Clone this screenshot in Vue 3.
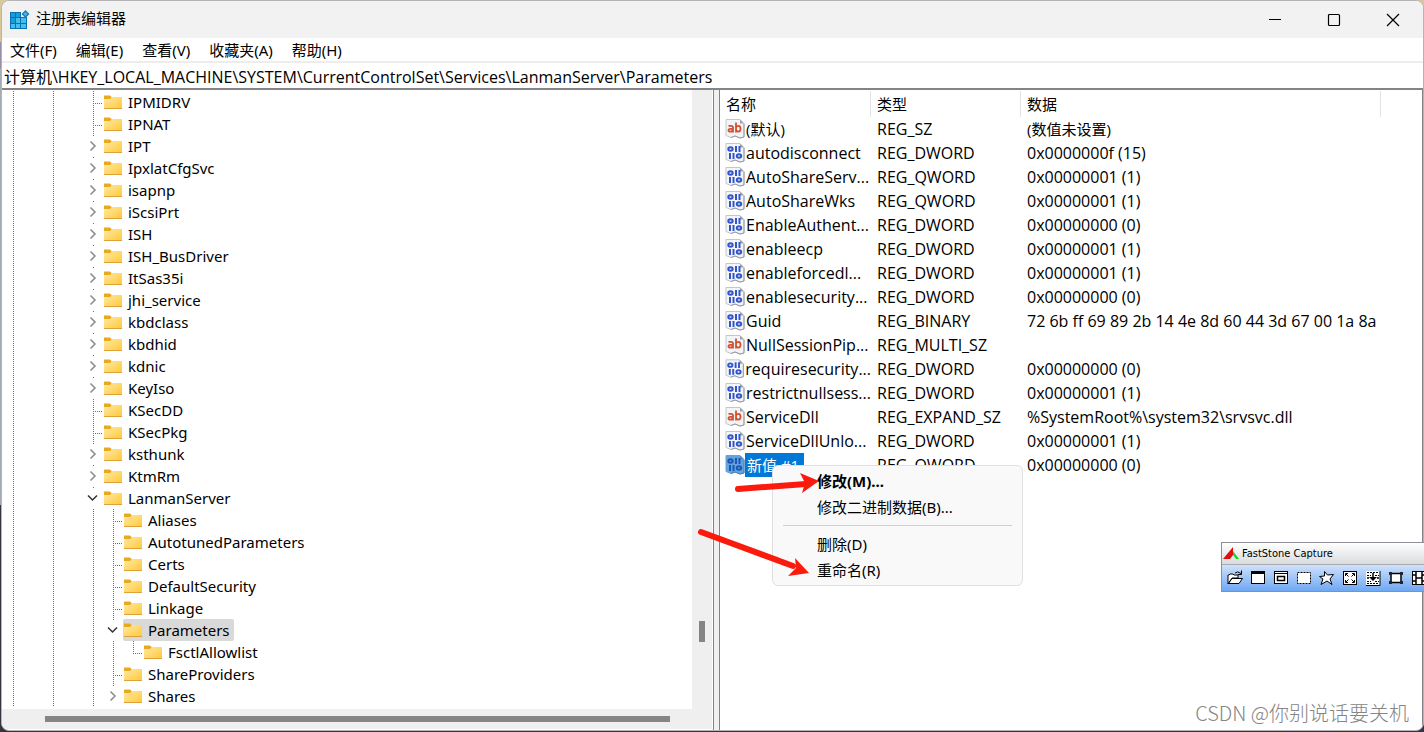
<script setup>
import { ref } from 'vue'

const menus = ['文件(F)', '编辑(E)', '查看(V)', '收藏夹(A)', '帮助(H)']
const path = ref('计算机\\HKEY_LOCAL_MACHINE\\SYSTEM\\CurrentControlSet\\Services\\LanmanServer\\Parameters')

const base = ['line', 'blank', 'line', 'blank']
const node = (name, kind, extra = [], selected = false) => ({
  name,
  cells: [...base, ...extra, kind],
  selected
})

const tree = [
  node('IPMIDRV', 'tee'),
  node('IPNAT', 'tee'),
  node('IPT', 'closed'),
  node('IpxlatCfgSvc', 'closed'),
  node('isapnp', 'closed'),
  node('iScsiPrt', 'closed'),
  node('ISH', 'closed'),
  node('ISH_BusDriver', 'closed'),
  node('ItSas35i', 'closed'),
  node('jhi_service', 'closed'),
  node('kbdclass', 'closed'),
  node('kbdhid', 'closed'),
  node('kdnic', 'closed'),
  node('KeyIso', 'closed'),
  node('KSecDD', 'tee'),
  node('KSecPkg', 'tee'),
  node('ksthunk', 'closed'),
  node('KtmRm', 'closed'),
  node('LanmanServer', 'open'),
  node('Aliases', 'tee', ['line']),
  node('AutotunedParameters', 'tee', ['line']),
  node('Certs', 'tee', ['line']),
  node('DefaultSecurity', 'tee', ['line']),
  node('Linkage', 'tee', ['line']),
  node('Parameters', 'open', ['line'], true),
  node('FsctlAllowlist', 'elbow', ['line', 'line']),
  node('ShareProviders', 'tee', ['line']),
  node('Shares', 'closed', ['line'])
]

const values = [
  ['s', '(默认)', 'REG_SZ', '(数值未设置)'],
  ['b', 'autodisconnect', 'REG_DWORD', '0x0000000f (15)'],
  ['b', 'AutoShareServ...', 'REG_QWORD', '0x00000001 (1)'],
  ['b', 'AutoShareWks', 'REG_QWORD', '0x00000001 (1)'],
  ['b', 'EnableAuthent...', 'REG_DWORD', '0x00000000 (0)'],
  ['b', 'enableecp', 'REG_DWORD', '0x00000001 (1)'],
  ['b', 'enableforcedl...', 'REG_DWORD', '0x00000001 (1)'],
  ['b', 'enablesecurity...', 'REG_DWORD', '0x00000000 (0)'],
  ['b', 'Guid', 'REG_BINARY', '72 6b ff 69 89 2b 14 4e 8d 60 44 3d 67 00 1a 8a'],
  ['s', 'NullSessionPip...', 'REG_MULTI_SZ', ''],
  ['b', 'requiresecurity...', 'REG_DWORD', '0x00000000 (0)'],
  ['b', 'restrictnullsess...', 'REG_DWORD', '0x00000001 (1)'],
  ['s', 'ServiceDll', 'REG_EXPAND_SZ', '%SystemRoot%\\system32\\srvsvc.dll'],
  ['b', 'ServiceDllUnlo...', 'REG_DWORD', '0x00000001 (1)'],
  ['b', '新值 #1', 'REG_QWORD', '0x00000000 (0)', true]
]

const isHan = (s) => /[\u4e00-\u9fff]/.test(s)
</script>

<template>
  <div class="desktop">
    <main class="window">
      <header class="titlebar">
        <svg class="app-icon" width="20" height="20" viewBox="0 0 20 20" aria-hidden="true">
          <rect x="0" y="2" width="17" height="17" fill="#0a6fb0" />
          <g fill="#1a9bdb">
            <rect x="1" y="3" width="4" height="4" /><rect x="6" y="3" width="4" height="4" />
            <rect x="1" y="8" width="4" height="5" />
          </g>
          <g fill="#41c0ee">
            <rect x="6" y="8" width="4" height="5" /><rect x="11" y="8" width="5" height="5" />
            <rect x="1" y="14" width="4" height="4" /><rect x="6" y="14" width="4" height="4" />
            <rect x="11" y="14" width="5" height="4" />
          </g>
          <path d="M11 0H20V7H11Z" fill="#f2f2f2" />
          <path d="M15.500 0L19.500 4L15.500 8L11.500 4Z" fill="#1680bd" />
          <path d="M15.500 2L17.500 4L15.500 6L13.500 4Z" fill="#4fb4df" />
        </svg>
        <h1>注册表编辑器</h1>
        <div class="controls">
          <button type="button" aria-label="最小化">
            <svg width="14" height="14" viewBox="0 0 14 14"><path d="M1 6.500H13" stroke="#000" /></svg>
          </button>
          <button type="button" aria-label="最大化">
            <svg width="14" height="14" viewBox="0 0 14 14"><rect x="1.500" y="1.500" width="11" height="11" rx="1" fill="none" stroke="#000" stroke-width="1.200" /></svg>
          </button>
          <button type="button" aria-label="关闭">
            <svg width="14" height="14" viewBox="0 0 14 14"><path d="M1 1L13 13M13 1L1 13" stroke="#000" stroke-width="1.200" /></svg>
          </button>
        </div>
      </header>

      <nav class="menubar">
        <button v-for="m in menus" :key="m" type="button">{{ m }}</button>
      </nav>

      <div class="address">
        <input v-model="path" type="text" aria-label="地址" spellcheck="false" />
      </div>

      <div class="panes">
        <section class="tree-pane">
          <ul class="tree">
            <li v-for="n in tree" :key="n.name">
              <i v-for="(c, i) in n.cells" :key="i" class="cell" :class="c">
                <svg v-if="c === 'closed'" width="8" height="12" viewBox="0 0 8 12"><path d="M1.500 1.500L6 6L1.500 10.500" fill="none" stroke="#8a8a8a" stroke-width="1.500" /></svg>
                <svg v-if="c === 'open'" width="12" height="8" viewBox="0 0 12 8"><path d="M1 1.500L5.500 6L10 1.500" fill="none" stroke="#333" stroke-width="1.500" /></svg>
              </i>
              <span class="label" :class="{ selected: n.selected }">
                <svg width="20" height="16" viewBox="0 0 20 16" aria-hidden="true">
                  <path d="M1 1.500H7L9 3.500V7H1Z" fill="#e9a91f" />
                  <path d="M1 5H7L9 3H19V15H1Z" fill="url(#folder)" />
                  <path d="M1 14.500H19" stroke="#dfa23a" />
                </svg>
                {{ n.name }}
              </span>
            </li>
          </ul>
          <div class="vbar"><div class="vthumb"></div></div>
          <div class="hbar"><div class="hthumb"></div></div>
        </section>

        <div class="splitter"></div>

        <section class="value-pane">
          <table>
            <colgroup><col class="c1" /><col class="c2" /><col class="c3" /><col /></colgroup>
            <thead>
              <tr><th>名称</th><th>类型</th><th>数据</th><td></td></tr>
            </thead>
            <tbody>
              <tr v-for="v in values" :key="v[1]">
                <td class="name" :class="{ han: isHan(v[1]) }">
                  <span class="entry" :class="{ chosen: v[4] }">
                    <svg width="20" height="20" viewBox="0 0 20 20" aria-hidden="true">
                      <path d="M1 0.500H15L19 4.500V18L15 19L10 17L6 18.500L1 16.500Z" :fill="v[4] ? '#62a5dc' : '#f3f4f7'" :stroke="v[4] ? '#62a5dc' : '#c3c6cb'" />
                      <path d="M15 0.500V4.500H19" :fill="v[4] ? '#5490c4' : '#9fa3a8'" />
                      <path d="M19 5V18L15 19L10 17L6 18.500" fill="none" :stroke="v[4] ? '#4f7fa8' : '#96999e'" />
                      <g v-if="v[0] === 's'" fill="none" stroke="#d4502f" stroke-width="1.800">
                        <path d="M3.500 6.900H6Q8 6.900 8 8.500V13.500M8 9.800H5.500Q3.500 9.800 3.500 11.200T5.500 12.600Q7.200 12.600 8 11" />
                        <path d="M11 3.500V13.500M11 8.500Q12 6.800 13.500 6.900Q15.500 7 15.500 9.800T13.500 12.600Q12 12.700 11 11" />
                      </g>
                      <g v-else fill="none" :stroke="v[4] ? '#1d55b8' : '#3355cc'" stroke-width="2">
                        <ellipse cx="5.500" cy="6" rx="2.200" ry="1.800" />
                        <path d="M11 3V9M14.500 3V9M5 10V16M8.500 10V16" />
                        <ellipse cx="14" cy="13" rx="2.200" ry="1.800" />
                      </g>
                    </svg>
                    <span>{{ v[1] }}</span>
                  </span>
                </td>
                <td>{{ v[2] }}</td>
                <td :class="{ han: isHan(v[3]) }">{{ v[3] }}</td>
                <td></td>
              </tr>
            </tbody>
          </table>
        </section>
      </div>
    </main>

    <div class="context" role="menu">
      <button type="button" role="menuitem" class="strong">修改(M)...</button>
      <button type="button" role="menuitem">修改二进制数据(B)...</button>
      <hr />
      <button type="button" role="menuitem">删除(D)</button>
      <button type="button" role="menuitem">重命名(R)</button>
    </div>

    <svg class="arrows" width="130" height="110" viewBox="0 0 130 110" aria-hidden="true">
      <g stroke="#fb1b0c" stroke-width="6" stroke-linecap="round">
        <path d="M40 19L108 14" />
        <path d="M3 62L95 96" />
      </g>
      <path d="M121 11L102 3L107 13L104 23Z" fill="#fb1b0c" />
      <path d="M111 103L97 88L98 98L90 106Z" fill="#fb1b0c" />
    </svg>

    <aside class="capture">
      <div class="capture-title">
        <svg width="17" height="14" viewBox="0 0 17 14" aria-hidden="true">
          <path d="M0 12L10 0L10 8L7 12Z" fill="#e00f0f" />
          <path d="M10 4L16 12H13L10 8Z" fill="#20d030" />
        </svg>
        <span>FastStone Capture</span>
      </div>
      <div class="capture-tools">
        <button type="button" aria-label="打开">
          <svg width="16" height="16" viewBox="0 0 16 16"><path d="M1 14V5H2L3 4H6L7 5H11V8H5L1 14" fill="#fff" stroke="#000" /><path d="M1.500 13.500L5 8.500H15.500L12 13.500Z" fill="#fff" stroke="#000" /><path d="M8 3Q10.500 0.500 14 3.500M14.500 0.500V4.500H11" fill="none" stroke="#000" /></svg>
        </button>
        <button type="button" aria-label="活动窗口">
          <svg width="16" height="16" viewBox="0 0 16 16"><rect x="1.500" y="1.500" width="13" height="12" fill="#fff" stroke="#000" /><path d="M1 2.500H15" stroke="#000" stroke-width="3" /></svg>
        </button>
        <button type="button" aria-label="窗口对象">
          <svg width="16" height="16" viewBox="0 0 16 16"><rect x="1.500" y="1.500" width="13" height="12" fill="#fff" stroke="#000" /><path d="M2 3.500H14" stroke="#000" /><rect x="4.500" y="6.500" width="7" height="4" fill="none" stroke="#000" stroke-width="1.500" /></svg>
        </button>
        <button type="button" aria-label="矩形区域">
          <svg width="16" height="16" viewBox="0 0 16 16"><rect x="1.500" y="2.500" width="13" height="11" fill="#fff" stroke="#000" stroke-dasharray="2 1" /></svg>
        </button>
        <button type="button" aria-label="手绘区域">
          <svg width="16" height="16" viewBox="0 0 16 16"><path d="M5.500 1.500L8.500 5L14.500 4.500L11 9L13 14.500L8 11L2 14.500L4 9L0.500 6.500L5.500 6Z" fill="#fff" stroke="#000" /></svg>
        </button>
        <button type="button" aria-label="全屏">
          <svg width="16" height="16" viewBox="0 0 16 16"><rect x="1.500" y="1.500" width="13" height="13" fill="#fff" stroke="#000" /><path d="M4 4L6.500 6.500M12 4L9.500 6.500M4 12L6.500 9.500M12 12L9.500 9.500M3.500 6V3.500H6M10 3.500H12.500V6M3.500 10V12.500H6M10 12.500H12.500V10" fill="none" stroke="#000" /></svg>
        </button>
        <button type="button" aria-label="滚动窗口">
          <svg width="16" height="16" viewBox="0 0 16 16"><rect x="1" y="1" width="14" height="15" fill="#fff" /><path d="M15 1V15.500H1" fill="none" stroke="#000" /><path d="M2 2.500H14M2 5.500H6M10 5.500H14M2 13.500H14M2 11.500H6M10 11.500H14" stroke="#000" stroke-dasharray="2 1" /><path d="M8 3V10M2 8H4M12 8H14" stroke="#000" stroke-width="1.500" /><path d="M4 7H12L8 11Z" /></svg>
        </button>
        <button type="button" aria-label="固定区域">
          <svg width="16" height="16" viewBox="0 0 16 16"><rect x="3" y="3.500" width="10" height="9" fill="#fff" stroke="#000" stroke-width="1.500" /><g fill="#223"><rect x="1" y="2" width="3" height="3" /><rect x="12" y="2" width="3" height="3" /><rect x="1" y="11" width="3" height="3" /><rect x="12" y="11" width="3" height="3" /></g></svg>
        </button>
        <button type="button" aria-label="屏幕录像">
          <svg width="16" height="16" viewBox="0 0 16 16"><rect x="1.500" y="1.500" width="13" height="13" fill="#fff" stroke="#000" /><path d="M5 1V15M11 1V15M5 8H11M1 5H5M1 11H5M11 5H15M11 11H15" stroke="#000" stroke-width="1.500" /></svg>
        </button>
      </div>
    </aside>

    <p class="watermark">CSDN @你别说话要关机</p>

    <svg class="defs" width="0" height="0" aria-hidden="true">
      <linearGradient id="folder" x1="0" y1="0" x2="1" y2="1">
        <stop offset="0" stop-color="#ffe9a6" /><stop offset="1" stop-color="#ffc935" />
      </linearGradient>
    </svg>
  </div>
</template>

<style>
body {
  margin: 0;
}
</style>

<style scoped>
.desktop {
  position: relative;
  min-height: 100vh;
  box-sizing: border-box;
  padding: 0 0 1px 1px;
  display: flex;
  overflow: hidden;
  background: linear-gradient(#d9c99a 0 42px, #9a8fa8 42px 68px, #a3abb3 68px 505px, #35343f 505px);
  font-family: "Noto Sans", "Noto Sans CJK SC", sans-serif;
  font-size: 15px;
  color: #000;
}
button {
  font: inherit;
  color: inherit;
  border: 0;
  padding: 0;
  background: none;
}
.window {
  flex: 1;
  display: flex;
  flex-direction: column;
  box-sizing: border-box;
  min-width: 0;
  border: 1px solid #b4b4b8;
  border-radius: 8px;
  overflow: hidden;
  background: #fff;
}
.titlebar {
  display: flex;
  align-items: center;
  height: 37px;
  padding: 0 1px 0 8px;
  background: #f2f2f2;
}
h1 {
  margin: 0 0 0 6px;
  flex: 1;
  font-size: 15px;
  font-weight: 400;
  line-height: 20px;
  padding-bottom: 3px;
}
.controls {
  display: flex;
}
.controls button {
  width: 59px;
  height: 35px;
  display: grid;
  place-items: center;
}
.menubar {
  display: flex;
  gap: 19px;
  height: 23px;
  padding-left: 8px;
  border-bottom: 2px solid #ededed;
}
.menubar button {
  line-height: 24px;
}
.address {
  display: flex;
  height: 25px;
  border-bottom: 2px solid #848388;
}
.address input {
  flex: 1;
  font-family: "Open Sans", "Noto Sans CJK SC", sans-serif;
  font-size: 16px;
  color: inherit;
  border: 0;
  padding: 0 2px;
  outline: 0;
  background: #fff;
}
.panes {
  flex: 1;
  display: flex;
}
.tree-pane {
  flex: 0 0 712px;
  box-sizing: border-box;
  display: grid;
  grid-template: 1fr 20px / 1fr 20px;
  border-right: 1px solid #848388;
  padding: 0 1px 1px 0;
}
.tree {
  list-style: none;
  margin: 0;
  padding: 1px 0 1px 1px;
}
.tree li {
  display: flex;
  height: 22px;
}
.cell {
  position: relative;
  width: 20px;
  height: 22px;
  display: grid;
  place-items: center;
}
.line,
.closed,
.open {
  background: repeating-linear-gradient(#6e6e6e 0 1px, transparent 1px 2px) 10px 0 / 1px 22px no-repeat;
}
.closed,
.open {
  background-size: 1px 1px;
}
.tee {
  background:
    repeating-linear-gradient(#6e6e6e 0 1px, transparent 1px 2px) 10px 0 / 1px 22px no-repeat,
    repeating-linear-gradient(90deg, #6e6e6e 0 1px, transparent 1px 2px) 10px 12px / 10px 1px no-repeat;
}
.elbow {
  background:
    repeating-linear-gradient(#6e6e6e 0 1px, transparent 1px 2px) 10px 0 / 1px 12px no-repeat,
    repeating-linear-gradient(90deg, #6e6e6e 0 1px, transparent 1px 2px) 10px 12px / 10px 1px no-repeat;
}
.label {
  display: flex;
  align-items: center;
  gap: 5px;
  line-height: 22px;
  padding-right: 4px;
  border-radius: 2px;
}
.selected {
  background: #d9d9d9;
}
.vbar,
.hbar {
  background: #efefef;
}
.vbar {
  display: grid;
  grid-template-rows: 530fr 21px 67fr;
  justify-items: center;
}
.vthumb {
  grid-row: 2;
  width: 6px;
  background: #858585;
}
.hbar {
  grid-column: 1 / 3;
  display: grid;
  grid-template-columns: 43fr 625fr 42fr;
  align-items: center;
}
.hthumb {
  grid-column: 2;
  height: 6px;
  background: #858585;
}
.splitter {
  width: 5px;
  background: #f0f0f0;
}
.value-pane {
  flex: 1;
  min-width: 0;
  border-left: 1px solid #848388;
  border-right: 1px solid #848388;
  padding-top: 1px;
}
table {
  width: 100%;
  table-layout: fixed;
  border-collapse: separate;
  border-spacing: 0;
}
.c1 {
  width: 151px;
}
.c2 {
  width: 150px;
}
.c3 {
  width: 360px;
}
th {
  height: 26px;
  padding: 0 0 0 6px;
  font-weight: 400;
  line-height: 26px;
  vertical-align: top;
  text-align: left;
  border-right: 1px solid #e3e3e3;
}
td {
  height: 24px;
  padding: 0 0 0 6px;
  font-family: "Open Sans", "Noto Sans CJK SC", sans-serif;
  font-size: 16px;
  line-height: 24px;
  white-space: nowrap;
}
.han {
  font-size: 15px;
}
.name {
  padding-left: 5px;
}
.entry {
  display: flex;
  align-items: center;
  gap: 1px;
}
.chosen {
  gap: 0;
}
.chosen span {
  padding: 0 5px 0 2px;
  color: #fff;
  background: #0078d7;
}
.context {
  position: absolute;
  left: 772px;
  top: 465px;
  width: 251px;
  box-sizing: border-box;
  padding: 2px 10px 2px;
  border: 1px solid #e0e0e0;
  border-radius: 6px;
  background: #f9f9f9;
}
.context button {
  display: block;
  width: 100%;
  padding-left: 34px;
  line-height: 26px;
  text-align: left;
}
.context .strong {
  font-weight: 700;
}
hr {
  height: 1px;
  margin: 5px 0;
  border: 0;
  background: #d0d0d0;
}
.arrows {
  position: absolute;
  left: 698px;
  top: 470px;
}
.capture {
  position: absolute;
  left: 1221px;
  right: 0;
  top: 542px;
  box-sizing: border-box;
  overflow: hidden;
  border: 1px solid #8d9096;
  border-right: 0;
  font-family: "DejaVu Sans Condensed", sans-serif;
  font-size: 11px;
}
.capture-title {
  display: flex;
  align-items: center;
  gap: 2px;
  height: 21px;
  padding-left: 1px;
  border-bottom: 1px solid #a5a9b0;
  background: linear-gradient(#fff, #d9dbdd);
}
.capture-tools {
  display: flex;
  gap: 7px;
  height: 26px;
  padding-left: 5px;
  background: linear-gradient(#cfe1fb, #6fa8f3);
}
.capture-tools button {
  display: grid;
  place-items: center;
  flex: 0 0 16px;
}
.watermark {
  position: absolute;
  right: 15px;
  bottom: 5px;
  margin: 0;
  font-family: "Noto Sans CJK SC", sans-serif;
  font-size: 20px;
  font-weight: 300;
  line-height: 28px;
  color: #858585;
}
.defs {
  position: absolute;
}
</style>
